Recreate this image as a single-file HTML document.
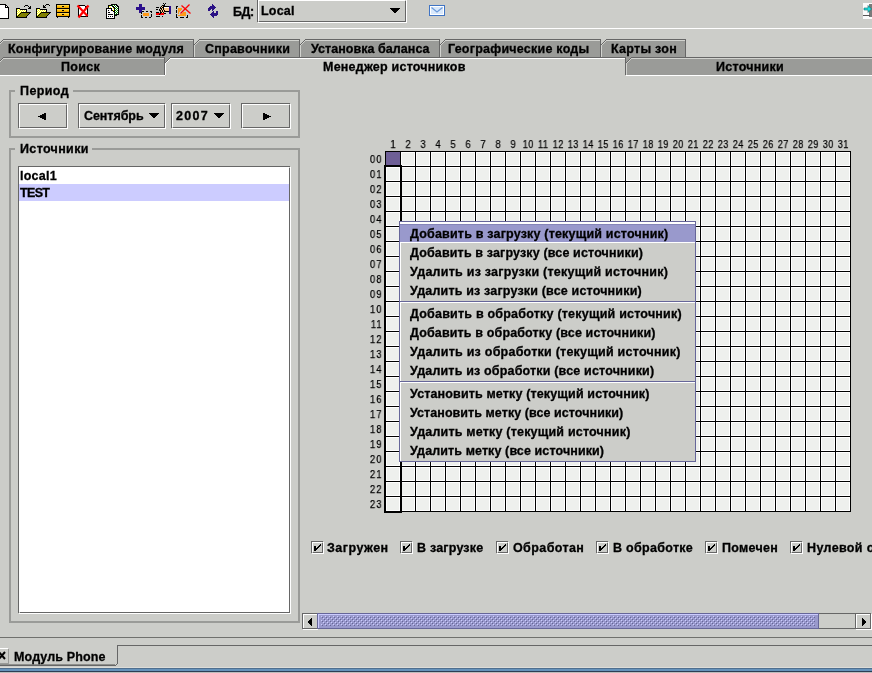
<!DOCTYPE html><html><head><meta charset='utf-8'><style>
*{margin:0;padding:0;box-sizing:border-box}
html,body{width:872px;height:673px;overflow:hidden;background:#cccdc9}
body{position:relative;font-family:"Liberation Sans",sans-serif;}
.a{position:absolute}
.t{position:absolute;font-weight:bold;font-size:12.5px;line-height:14px;white-space:pre;color:#000;will-change:transform;-webkit-text-stroke:0.3px #000}
.n{position:absolute;font-weight:normal;font-size:11px;line-height:12px;white-space:pre;color:#000;will-change:transform;-webkit-text-stroke:0.25px #000}
svg{position:absolute;overflow:visible}
</style></head><body><div class="a" style="left:0px;top:28px;width:872px;height:1px;background:#ffffff;"></div>
<svg class="a" style="left:-6px;top:4px" width="16" height="15" shape-rendering="crispEdges"><rect x="0" y="0" width="12" height="1" fill="#000000"/><rect x="0" y="1" width="1" height="1" fill="#000000"/><rect x="1" y="1" width="10" height="1" fill="#ffffff"/><rect x="11" y="1" width="2" height="1" fill="#000000"/><rect x="0" y="2" width="1" height="1" fill="#000000"/><rect x="1" y="2" width="10" height="1" fill="#ffffff"/><rect x="11" y="2" width="1" height="1" fill="#000000"/><rect x="12" y="2" width="1" height="1" fill="#ffffff"/><rect x="13" y="2" width="1" height="1" fill="#000000"/><rect x="0" y="3" width="1" height="1" fill="#000000"/><rect x="1" y="3" width="10" height="1" fill="#ffffff"/><rect x="11" y="3" width="4" height="1" fill="#000000"/><rect x="0" y="4" width="1" height="1" fill="#000000"/><rect x="1" y="4" width="13" height="1" fill="#ffffff"/><rect x="14" y="4" width="1" height="1" fill="#000000"/><rect x="0" y="5" width="1" height="1" fill="#000000"/><rect x="1" y="5" width="13" height="1" fill="#ffffff"/><rect x="14" y="5" width="1" height="1" fill="#000000"/><rect x="0" y="6" width="1" height="1" fill="#000000"/><rect x="1" y="6" width="13" height="1" fill="#ffffff"/><rect x="14" y="6" width="1" height="1" fill="#000000"/><rect x="0" y="7" width="1" height="1" fill="#000000"/><rect x="1" y="7" width="13" height="1" fill="#ffffff"/><rect x="14" y="7" width="1" height="1" fill="#000000"/><rect x="0" y="8" width="1" height="1" fill="#000000"/><rect x="1" y="8" width="13" height="1" fill="#ffffff"/><rect x="14" y="8" width="1" height="1" fill="#000000"/><rect x="0" y="9" width="1" height="1" fill="#000000"/><rect x="1" y="9" width="13" height="1" fill="#ffffff"/><rect x="14" y="9" width="1" height="1" fill="#000000"/><rect x="0" y="10" width="1" height="1" fill="#000000"/><rect x="1" y="10" width="13" height="1" fill="#ffffff"/><rect x="14" y="10" width="1" height="1" fill="#000000"/><rect x="0" y="11" width="1" height="1" fill="#000000"/><rect x="1" y="11" width="13" height="1" fill="#ffffff"/><rect x="14" y="11" width="1" height="1" fill="#000000"/><rect x="0" y="12" width="1" height="1" fill="#000000"/><rect x="1" y="12" width="13" height="1" fill="#ffffff"/><rect x="14" y="12" width="1" height="1" fill="#000000"/><rect x="0" y="13" width="1" height="1" fill="#000000"/><rect x="1" y="13" width="13" height="1" fill="#ffffff"/><rect x="14" y="13" width="1" height="1" fill="#000000"/><rect x="0" y="14" width="15" height="1" fill="#000000"/></svg>
<svg class="a" style="left:14px;top:2px" width="18" height="16" shape-rendering="crispEdges"><rect x="11" y="3" width="3" height="1" fill="#000000"/><rect x="10" y="4" width="1" height="1" fill="#000000"/><rect x="14" y="4" width="1" height="1" fill="#000000"/><rect x="16" y="4" width="1" height="1" fill="#000000"/><rect x="15" y="5" width="2" height="1" fill="#000000"/><rect x="2" y="6" width="4" height="1" fill="#000000"/><rect x="14" y="6" width="3" height="1" fill="#000000"/><rect x="2" y="7" width="1" height="1" fill="#000000"/><rect x="3" y="7" width="1" height="1" fill="#ffff00"/><rect x="4" y="7" width="1" height="1" fill="#ffffff"/><rect x="5" y="7" width="1" height="1" fill="#ffff00"/><rect x="6" y="7" width="7" height="1" fill="#000000"/><rect x="2" y="8" width="1" height="1" fill="#000000"/><rect x="3" y="8" width="1" height="1" fill="#ffffff"/><rect x="4" y="8" width="1" height="1" fill="#ffff00"/><rect x="5" y="8" width="1" height="1" fill="#ffffff"/><rect x="6" y="8" width="1" height="1" fill="#ffff00"/><rect x="7" y="8" width="1" height="1" fill="#ffffff"/><rect x="8" y="8" width="1" height="1" fill="#ffff00"/><rect x="9" y="8" width="1" height="1" fill="#ffffff"/><rect x="10" y="8" width="1" height="1" fill="#ffff00"/><rect x="11" y="8" width="1" height="1" fill="#ffffff"/><rect x="12" y="8" width="1" height="1" fill="#000000"/><rect x="2" y="9" width="1" height="1" fill="#000000"/><rect x="3" y="9" width="1" height="1" fill="#ffff00"/><rect x="4" y="9" width="1" height="1" fill="#ffffff"/><rect x="5" y="9" width="1" height="1" fill="#ffff00"/><rect x="6" y="9" width="1" height="1" fill="#ffffff"/><rect x="7" y="9" width="1" height="1" fill="#ffff00"/><rect x="8" y="9" width="1" height="1" fill="#ffffff"/><rect x="9" y="9" width="1" height="1" fill="#ffff00"/><rect x="10" y="9" width="1" height="1" fill="#ffffff"/><rect x="11" y="9" width="1" height="1" fill="#ffff00"/><rect x="12" y="9" width="1" height="1" fill="#000000"/><rect x="2" y="10" width="1" height="1" fill="#000000"/><rect x="3" y="10" width="1" height="1" fill="#ffffff"/><rect x="4" y="10" width="1" height="1" fill="#ffff00"/><rect x="5" y="10" width="1" height="1" fill="#ffffff"/><rect x="6" y="10" width="1" height="1" fill="#ffff00"/><rect x="7" y="10" width="10" height="1" fill="#000000"/><rect x="2" y="11" width="1" height="1" fill="#000000"/><rect x="3" y="11" width="1" height="1" fill="#ffff00"/><rect x="4" y="11" width="1" height="1" fill="#ffffff"/><rect x="5" y="11" width="1" height="1" fill="#ffff00"/><rect x="6" y="11" width="1" height="1" fill="#000000"/><rect x="7" y="11" width="8" height="1" fill="#808000"/><rect x="15" y="11" width="1" height="1" fill="#000000"/><rect x="2" y="12" width="1" height="1" fill="#000000"/><rect x="3" y="12" width="1" height="1" fill="#ffffff"/><rect x="4" y="12" width="1" height="1" fill="#ffff00"/><rect x="5" y="12" width="1" height="1" fill="#000000"/><rect x="6" y="12" width="8" height="1" fill="#808000"/><rect x="14" y="12" width="1" height="1" fill="#000000"/><rect x="2" y="13" width="1" height="1" fill="#000000"/><rect x="3" y="13" width="1" height="1" fill="#ffff00"/><rect x="4" y="13" width="1" height="1" fill="#000000"/><rect x="5" y="13" width="8" height="1" fill="#808000"/><rect x="13" y="13" width="1" height="1" fill="#000000"/><rect x="2" y="14" width="2" height="1" fill="#000000"/><rect x="4" y="14" width="8" height="1" fill="#808000"/><rect x="12" y="14" width="1" height="1" fill="#000000"/><rect x="2" y="15" width="11" height="1" fill="#000000"/></svg>
<svg class="a" style="left:34px;top:2px" width="18" height="16" shape-rendering="crispEdges"><rect x="12" y="2" width="3" height="1" fill="#000000"/><rect x="9" y="3" width="1" height="1" fill="#000000"/><rect x="11" y="3" width="1" height="1" fill="#000000"/><rect x="15" y="3" width="1" height="1" fill="#000000"/><rect x="9" y="4" width="2" height="1" fill="#000000"/><rect x="9" y="5" width="3" height="1" fill="#000000"/><rect x="2" y="6" width="4" height="1" fill="#000000"/><rect x="2" y="7" width="1" height="1" fill="#000000"/><rect x="3" y="7" width="1" height="1" fill="#ffff00"/><rect x="4" y="7" width="1" height="1" fill="#ffffff"/><rect x="5" y="7" width="1" height="1" fill="#ffff00"/><rect x="6" y="7" width="7" height="1" fill="#000000"/><rect x="2" y="8" width="1" height="1" fill="#000000"/><rect x="3" y="8" width="1" height="1" fill="#ffffff"/><rect x="4" y="8" width="1" height="1" fill="#ffff00"/><rect x="5" y="8" width="1" height="1" fill="#ffffff"/><rect x="6" y="8" width="1" height="1" fill="#ffff00"/><rect x="7" y="8" width="1" height="1" fill="#ffffff"/><rect x="8" y="8" width="1" height="1" fill="#ffff00"/><rect x="9" y="8" width="1" height="1" fill="#ffffff"/><rect x="10" y="8" width="1" height="1" fill="#ffff00"/><rect x="11" y="8" width="1" height="1" fill="#ffffff"/><rect x="12" y="8" width="1" height="1" fill="#000000"/><rect x="2" y="9" width="1" height="1" fill="#000000"/><rect x="3" y="9" width="1" height="1" fill="#ffff00"/><rect x="4" y="9" width="1" height="1" fill="#ffffff"/><rect x="5" y="9" width="1" height="1" fill="#ffff00"/><rect x="6" y="9" width="1" height="1" fill="#ffffff"/><rect x="7" y="9" width="1" height="1" fill="#ffff00"/><rect x="8" y="9" width="1" height="1" fill="#ffffff"/><rect x="9" y="9" width="1" height="1" fill="#ffff00"/><rect x="10" y="9" width="1" height="1" fill="#ffffff"/><rect x="11" y="9" width="1" height="1" fill="#ffff00"/><rect x="12" y="9" width="1" height="1" fill="#000000"/><rect x="2" y="10" width="1" height="1" fill="#000000"/><rect x="3" y="10" width="1" height="1" fill="#ffffff"/><rect x="4" y="10" width="1" height="1" fill="#ffff00"/><rect x="5" y="10" width="1" height="1" fill="#ffffff"/><rect x="6" y="10" width="1" height="1" fill="#ffff00"/><rect x="7" y="10" width="10" height="1" fill="#000000"/><rect x="2" y="11" width="1" height="1" fill="#000000"/><rect x="3" y="11" width="1" height="1" fill="#ffff00"/><rect x="4" y="11" width="1" height="1" fill="#ffffff"/><rect x="5" y="11" width="1" height="1" fill="#ffff00"/><rect x="6" y="11" width="1" height="1" fill="#000000"/><rect x="7" y="11" width="8" height="1" fill="#808000"/><rect x="15" y="11" width="1" height="1" fill="#000000"/><rect x="2" y="12" width="1" height="1" fill="#000000"/><rect x="3" y="12" width="1" height="1" fill="#ffffff"/><rect x="4" y="12" width="1" height="1" fill="#ffff00"/><rect x="5" y="12" width="1" height="1" fill="#000000"/><rect x="6" y="12" width="8" height="1" fill="#808000"/><rect x="14" y="12" width="1" height="1" fill="#000000"/><rect x="2" y="13" width="1" height="1" fill="#000000"/><rect x="3" y="13" width="1" height="1" fill="#ffff00"/><rect x="4" y="13" width="1" height="1" fill="#000000"/><rect x="5" y="13" width="8" height="1" fill="#808000"/><rect x="13" y="13" width="1" height="1" fill="#000000"/><rect x="2" y="14" width="2" height="1" fill="#000000"/><rect x="4" y="14" width="8" height="1" fill="#808000"/><rect x="12" y="14" width="1" height="1" fill="#000000"/><rect x="2" y="15" width="11" height="1" fill="#000000"/></svg>
<svg class="a" style="left:54px;top:2px" width="18" height="16" shape-rendering="crispEdges"><rect x="2" y="2" width="14" height="1" fill="#000000"/><rect x="2" y="3" width="1" height="1" fill="#000000"/><rect x="3" y="3" width="12" height="1" fill="#ffd24a"/><rect x="15" y="3" width="1" height="1" fill="#000000"/><rect x="2" y="4" width="1" height="1" fill="#000000"/><rect x="3" y="4" width="5" height="1" fill="#ffbf00"/><rect x="8" y="4" width="2" height="1" fill="#000000"/><rect x="10" y="4" width="5" height="1" fill="#ffbf00"/><rect x="15" y="4" width="1" height="1" fill="#000000"/><rect x="2" y="5" width="1" height="1" fill="#000000"/><rect x="3" y="5" width="12" height="1" fill="#f0a800"/><rect x="15" y="5" width="1" height="1" fill="#000000"/><rect x="2" y="6" width="14" height="1" fill="#000000"/><rect x="2" y="7" width="1" height="1" fill="#000000"/><rect x="3" y="7" width="12" height="1" fill="#ffd24a"/><rect x="15" y="7" width="1" height="1" fill="#000000"/><rect x="2" y="8" width="1" height="1" fill="#000000"/><rect x="3" y="8" width="5" height="1" fill="#ffbf00"/><rect x="8" y="8" width="2" height="1" fill="#000000"/><rect x="10" y="8" width="5" height="1" fill="#ffbf00"/><rect x="15" y="8" width="1" height="1" fill="#000000"/><rect x="2" y="9" width="1" height="1" fill="#000000"/><rect x="3" y="9" width="12" height="1" fill="#f0a800"/><rect x="15" y="9" width="1" height="1" fill="#000000"/><rect x="2" y="10" width="14" height="1" fill="#000000"/><rect x="2" y="11" width="1" height="1" fill="#000000"/><rect x="3" y="11" width="12" height="1" fill="#ffd24a"/><rect x="15" y="11" width="1" height="1" fill="#000000"/><rect x="2" y="12" width="1" height="1" fill="#000000"/><rect x="3" y="12" width="5" height="1" fill="#ffbf00"/><rect x="8" y="12" width="2" height="1" fill="#000000"/><rect x="10" y="12" width="5" height="1" fill="#ffbf00"/><rect x="15" y="12" width="1" height="1" fill="#000000"/><rect x="2" y="13" width="1" height="1" fill="#000000"/><rect x="3" y="13" width="12" height="1" fill="#f0a800"/><rect x="15" y="13" width="1" height="1" fill="#000000"/><rect x="2" y="14" width="14" height="1" fill="#000000"/><rect x="3" y="15" width="1" height="1" fill="#000000"/><rect x="14" y="15" width="1" height="1" fill="#000000"/></svg>
<svg class="a" style="left:74px;top:2px" width="18" height="15" shape-rendering="crispEdges"><rect x="4" y="3" width="7" height="1" fill="#000000"/><rect x="4" y="4" width="1" height="1" fill="#000000"/><rect x="5" y="4" width="6" height="1" fill="#ffffff"/><rect x="11" y="4" width="2" height="1" fill="#000000"/><rect x="4" y="5" width="1" height="1" fill="#000000"/><rect x="5" y="5" width="6" height="1" fill="#ffffff"/><rect x="11" y="5" width="1" height="1" fill="#000000"/><rect x="12" y="5" width="1" height="1" fill="#ffffff"/><rect x="13" y="5" width="1" height="1" fill="#000000"/><rect x="4" y="6" width="1" height="1" fill="#000000"/><rect x="5" y="6" width="8" height="1" fill="#ffffff"/><rect x="13" y="6" width="1" height="1" fill="#000000"/><rect x="4" y="7" width="1" height="1" fill="#000000"/><rect x="5" y="7" width="8" height="1" fill="#ffffff"/><rect x="13" y="7" width="1" height="1" fill="#000000"/><rect x="4" y="8" width="1" height="1" fill="#000000"/><rect x="5" y="8" width="8" height="1" fill="#ffffff"/><rect x="13" y="8" width="1" height="1" fill="#000000"/><rect x="4" y="9" width="1" height="1" fill="#000000"/><rect x="5" y="9" width="8" height="1" fill="#ffffff"/><rect x="13" y="9" width="1" height="1" fill="#000000"/><rect x="4" y="10" width="1" height="1" fill="#000000"/><rect x="5" y="10" width="8" height="1" fill="#ffffff"/><rect x="13" y="10" width="1" height="1" fill="#000000"/><rect x="4" y="11" width="1" height="1" fill="#000000"/><rect x="5" y="11" width="8" height="1" fill="#ffffff"/><rect x="13" y="11" width="1" height="1" fill="#000000"/><rect x="4" y="12" width="1" height="1" fill="#000000"/><rect x="5" y="12" width="8" height="1" fill="#ffffff"/><rect x="13" y="12" width="1" height="1" fill="#000000"/><rect x="4" y="13" width="1" height="1" fill="#000000"/><rect x="5" y="13" width="8" height="1" fill="#ffffff"/><rect x="13" y="13" width="1" height="1" fill="#000000"/><rect x="4" y="14" width="10" height="1" fill="#000000"/></svg>
<svg class="a" style="left:74px;top:2px" width="18" height="18"><path d="M3.5 3.5 L13.5 14 M14.5 3.5 L4.5 15.5" stroke="#ff0000" stroke-width="2.2" fill="none"/></svg>
<svg class="a" style="left:102px;top:2px" width="20" height="17" shape-rendering="crispEdges"><rect x="9" y="2" width="6" height="1" fill="#000000"/><rect x="6" y="3" width="4" height="1" fill="#000000"/><rect x="10" y="3" width="1" height="1" fill="#008000"/><rect x="11" y="3" width="1" height="1" fill="#ffffff"/><rect x="12" y="3" width="1" height="1" fill="#008000"/><rect x="13" y="3" width="1" height="1" fill="#ffffff"/><rect x="14" y="3" width="2" height="1" fill="#000000"/><rect x="6" y="4" width="1" height="1" fill="#000000"/><rect x="7" y="4" width="1" height="1" fill="#ffff00"/><rect x="8" y="4" width="2" height="1" fill="#ffffff"/><rect x="10" y="4" width="2" height="1" fill="#000000"/><rect x="12" y="4" width="1" height="1" fill="#ffffff"/><rect x="13" y="4" width="1" height="1" fill="#008000"/><rect x="14" y="4" width="1" height="1" fill="#ffffff"/><rect x="15" y="4" width="2" height="1" fill="#000000"/><rect x="6" y="5" width="1" height="1" fill="#000000"/><rect x="7" y="5" width="1" height="1" fill="#ffffff"/><rect x="8" y="5" width="1" height="1" fill="#ffff00"/><rect x="9" y="5" width="2" height="1" fill="#ffffff"/><rect x="11" y="5" width="2" height="1" fill="#000000"/><rect x="13" y="5" width="1" height="1" fill="#ffffff"/><rect x="14" y="5" width="1" height="1" fill="#008000"/><rect x="15" y="5" width="1" height="1" fill="#ffffff"/><rect x="16" y="5" width="1" height="1" fill="#000000"/><rect x="4" y="6" width="6" height="1" fill="#000000"/><rect x="10" y="6" width="1" height="1" fill="#ffffff"/><rect x="11" y="6" width="1" height="1" fill="#ffff00"/><rect x="12" y="6" width="1" height="1" fill="#000000"/><rect x="13" y="6" width="1" height="1" fill="#008000"/><rect x="14" y="6" width="1" height="1" fill="#ffffff"/><rect x="15" y="6" width="1" height="1" fill="#008000"/><rect x="16" y="6" width="1" height="1" fill="#000000"/><rect x="4" y="7" width="1" height="1" fill="#000000"/><rect x="5" y="7" width="4" height="1" fill="#ffffff"/><rect x="9" y="7" width="1" height="1" fill="#000000"/><rect x="10" y="7" width="2" height="1" fill="#ffffff"/><rect x="12" y="7" width="1" height="1" fill="#000000"/><rect x="13" y="7" width="1" height="1" fill="#ffffff"/><rect x="14" y="7" width="1" height="1" fill="#008000"/><rect x="15" y="7" width="1" height="1" fill="#ffffff"/><rect x="16" y="7" width="1" height="1" fill="#000000"/><rect x="4" y="8" width="1" height="1" fill="#000000"/><rect x="5" y="8" width="1" height="1" fill="#ffffff"/><rect x="6" y="8" width="1" height="1" fill="#000000"/><rect x="7" y="8" width="2" height="1" fill="#ffffff"/><rect x="9" y="8" width="2" height="1" fill="#000000"/><rect x="11" y="8" width="1" height="1" fill="#ffff00"/><rect x="12" y="8" width="1" height="1" fill="#000000"/><rect x="13" y="8" width="1" height="1" fill="#008000"/><rect x="14" y="8" width="1" height="1" fill="#ffffff"/><rect x="15" y="8" width="1" height="1" fill="#008000"/><rect x="16" y="8" width="1" height="1" fill="#000000"/><rect x="4" y="9" width="1" height="1" fill="#000000"/><rect x="5" y="9" width="6" height="1" fill="#ffffff"/><rect x="11" y="9" width="2" height="1" fill="#000000"/><rect x="13" y="9" width="1" height="1" fill="#ffffff"/><rect x="14" y="9" width="1" height="1" fill="#008000"/><rect x="15" y="9" width="1" height="1" fill="#ffffff"/><rect x="16" y="9" width="1" height="1" fill="#000000"/><rect x="4" y="10" width="1" height="1" fill="#000000"/><rect x="5" y="10" width="1" height="1" fill="#ffffff"/><rect x="6" y="10" width="2" height="1" fill="#000000"/><rect x="8" y="10" width="4" height="1" fill="#ffffff"/><rect x="12" y="10" width="1" height="1" fill="#000000"/><rect x="13" y="10" width="1" height="1" fill="#008000"/><rect x="14" y="10" width="1" height="1" fill="#ffffff"/><rect x="15" y="10" width="1" height="1" fill="#008000"/><rect x="16" y="10" width="1" height="1" fill="#000000"/><rect x="4" y="11" width="1" height="1" fill="#000000"/><rect x="5" y="11" width="7" height="1" fill="#ffffff"/><rect x="12" y="11" width="1" height="1" fill="#000000"/><rect x="13" y="11" width="1" height="1" fill="#ffffff"/><rect x="14" y="11" width="1" height="1" fill="#008000"/><rect x="15" y="11" width="1" height="1" fill="#ffffff"/><rect x="16" y="11" width="1" height="1" fill="#000000"/><rect x="4" y="12" width="1" height="1" fill="#000000"/><rect x="5" y="12" width="1" height="1" fill="#ffffff"/><rect x="6" y="12" width="5" height="1" fill="#000000"/><rect x="11" y="12" width="1" height="1" fill="#ffffff"/><rect x="12" y="12" width="1" height="1" fill="#000000"/><rect x="13" y="12" width="1" height="1" fill="#008000"/><rect x="14" y="12" width="3" height="1" fill="#000000"/><rect x="4" y="13" width="1" height="1" fill="#000000"/><rect x="5" y="13" width="7" height="1" fill="#ffffff"/><rect x="12" y="13" width="3" height="1" fill="#000000"/><rect x="4" y="14" width="1" height="1" fill="#000000"/><rect x="5" y="14" width="1" height="1" fill="#ffffff"/><rect x="6" y="14" width="1" height="1" fill="#000000"/><rect x="7" y="14" width="1" height="1" fill="#ffffff"/><rect x="8" y="14" width="1" height="1" fill="#000000"/><rect x="9" y="14" width="1" height="1" fill="#ffffff"/><rect x="10" y="14" width="1" height="1" fill="#000000"/><rect x="11" y="14" width="1" height="1" fill="#ffffff"/><rect x="12" y="14" width="1" height="1" fill="#000000"/><rect x="4" y="15" width="1" height="1" fill="#000000"/><rect x="5" y="15" width="7" height="1" fill="#ffffff"/><rect x="12" y="15" width="1" height="1" fill="#000000"/><rect x="4" y="16" width="9" height="1" fill="#000000"/></svg>
<svg class="a" style="left:134px;top:2px" width="18" height="16" shape-rendering="crispEdges"><rect x="5" y="2" width="3" height="1" fill="#2b0f8c"/><rect x="5" y="3" width="3" height="1" fill="#2b0f8c"/><rect x="5" y="4" width="3" height="1" fill="#2b0f8c"/><rect x="2" y="5" width="9" height="1" fill="#2b0f8c"/><rect x="2" y="6" width="9" height="1" fill="#2b0f8c"/><rect x="2" y="7" width="9" height="1" fill="#2b0f8c"/><rect x="5" y="8" width="3" height="1" fill="#2b0f8c"/><rect x="5" y="9" width="3" height="1" fill="#2b0f8c"/><rect x="8" y="9" width="2" height="1" fill="#000000"/><rect x="12" y="9" width="2" height="1" fill="#000000"/><rect x="16" y="9" width="2" height="1" fill="#000000"/><rect x="5" y="10" width="2" height="1" fill="#2b0f8c"/><rect x="7" y="10" width="1" height="1" fill="#000000"/><rect x="17" y="10" width="1" height="1" fill="#000000"/><rect x="7" y="11" width="1" height="1" fill="#000000"/><rect x="9" y="11" width="6" height="1" fill="#ff9a1a"/><rect x="9" y="12" width="6" height="1" fill="#ff9a1a"/><rect x="17" y="12" width="1" height="1" fill="#000000"/><rect x="7" y="13" width="1" height="1" fill="#000000"/><rect x="9" y="13" width="6" height="1" fill="#ff9a1a"/><rect x="17" y="13" width="1" height="1" fill="#000000"/><rect x="7" y="14" width="1" height="1" fill="#000000"/><rect x="17" y="14" width="1" height="1" fill="#000000"/><rect x="7" y="15" width="2" height="1" fill="#000000"/><rect x="11" y="15" width="2" height="1" fill="#000000"/><rect x="15" y="15" width="2" height="1" fill="#000000"/></svg>
<svg class="a" style="left:152px;top:0px" width="20" height="17" shape-rendering="crispEdges"><rect x="11" y="3" width="1" height="1" fill="#000000"/><rect x="13" y="3" width="1" height="1" fill="#000000"/><rect x="12" y="4" width="1" height="1" fill="#000000"/><rect x="10" y="5" width="3" height="1" fill="#000000"/><rect x="9" y="6" width="1" height="1" fill="#000000"/><rect x="10" y="6" width="1" height="1" fill="#ffc98a"/><rect x="11" y="6" width="6" height="1" fill="#000000"/><rect x="17" y="6" width="2" height="1" fill="#2a0a8a"/><rect x="4" y="7" width="3" height="1" fill="#000000"/><rect x="8" y="7" width="1" height="1" fill="#000000"/><rect x="9" y="7" width="1" height="1" fill="#ffc98a"/><rect x="10" y="7" width="2" height="1" fill="#000000"/><rect x="12" y="7" width="5" height="1" fill="#ffffff"/><rect x="17" y="7" width="2" height="1" fill="#2a0a8a"/><rect x="8" y="8" width="2" height="1" fill="#000000"/><rect x="10" y="8" width="1" height="1" fill="#ffc98a"/><rect x="11" y="8" width="1" height="1" fill="#000000"/><rect x="12" y="8" width="5" height="1" fill="#ffc98a"/><rect x="17" y="8" width="2" height="1" fill="#2a0a8a"/><rect x="4" y="9" width="2" height="1" fill="#000000"/><rect x="7" y="9" width="1" height="1" fill="#000000"/><rect x="8" y="9" width="1" height="1" fill="#ffc98a"/><rect x="9" y="9" width="1" height="1" fill="#000000"/><rect x="10" y="9" width="1" height="1" fill="#ffc98a"/><rect x="11" y="9" width="1" height="1" fill="#000000"/><rect x="12" y="9" width="5" height="1" fill="#ffc98a"/><rect x="17" y="9" width="2" height="1" fill="#2a0a8a"/><rect x="7" y="10" width="2" height="1" fill="#000000"/><rect x="9" y="10" width="1" height="1" fill="#ffc98a"/><rect x="10" y="10" width="1" height="1" fill="#000000"/><rect x="11" y="10" width="1" height="1" fill="#ffc98a"/><rect x="12" y="10" width="1" height="1" fill="#000000"/><rect x="13" y="10" width="4" height="1" fill="#ffc98a"/><rect x="17" y="10" width="2" height="1" fill="#2a0a8a"/><rect x="8" y="11" width="1" height="1" fill="#000000"/><rect x="9" y="11" width="1" height="1" fill="#ffc98a"/><rect x="10" y="11" width="1" height="1" fill="#000000"/><rect x="11" y="11" width="1" height="1" fill="#ffc98a"/><rect x="12" y="11" width="5" height="1" fill="#000000"/><rect x="17" y="11" width="2" height="1" fill="#2a0a8a"/><rect x="4" y="12" width="3" height="1" fill="#000000"/><rect x="8" y="12" width="2" height="1" fill="#000000"/><rect x="10" y="12" width="1" height="1" fill="#ffc98a"/><rect x="11" y="12" width="1" height="1" fill="#000000"/><rect x="12" y="12" width="1" height="1" fill="#ffc98a"/><rect x="17" y="12" width="2" height="1" fill="#2a0a8a"/><rect x="4" y="13" width="4" height="1" fill="#ff0000"/><rect x="8" y="13" width="1" height="1" fill="#000000"/><rect x="9" y="13" width="3" height="1" fill="#ff0000"/><rect x="12" y="13" width="2" height="1" fill="#000000"/><rect x="17" y="13" width="2" height="1" fill="#2a0a8a"/><rect x="4" y="14" width="3" height="1" fill="#ff0000"/><rect x="7" y="14" width="1" height="1" fill="#000000"/><rect x="8" y="14" width="4" height="1" fill="#ff0000"/><rect x="4" y="16" width="4" height="1" fill="#000000"/><rect x="10" y="16" width="1" height="1" fill="#000000"/></svg>
<svg class="a" style="left:172px;top:0px" width="20" height="18" shape-rendering="crispEdges"><rect x="4" y="6" width="2" height="1" fill="#000000"/><rect x="4" y="7" width="1" height="1" fill="#000000"/><rect x="4" y="8" width="1" height="1" fill="#000000"/><rect x="6" y="8" width="4" height="1" fill="#ff9a1a"/><rect x="6" y="9" width="4" height="1" fill="#ff9a1a"/><rect x="4" y="10" width="1" height="1" fill="#000000"/><rect x="6" y="10" width="3" height="1" fill="#ff9a1a"/><rect x="4" y="11" width="1" height="1" fill="#000000"/><rect x="6" y="11" width="2" height="1" fill="#ff9a1a"/><rect x="4" y="12" width="1" height="1" fill="#000000"/><rect x="6" y="12" width="1" height="1" fill="#ff9a1a"/><rect x="11" y="12" width="3" height="1" fill="#ff9a1a"/><rect x="6" y="13" width="1" height="1" fill="#ff9a1a"/><rect x="10" y="13" width="4" height="1" fill="#ff9a1a"/><rect x="4" y="14" width="1" height="1" fill="#000000"/><rect x="8" y="14" width="6" height="1" fill="#ff9a1a"/><rect x="4" y="15" width="1" height="1" fill="#000000"/><rect x="6" y="15" width="8" height="1" fill="#ff9a1a"/><rect x="15" y="15" width="1" height="1" fill="#000000"/><rect x="4" y="16" width="1" height="1" fill="#000000"/><rect x="15" y="16" width="1" height="1" fill="#000000"/><rect x="4" y="17" width="2" height="1" fill="#000000"/><rect x="8" y="17" width="4" height="1" fill="#000000"/><rect x="14" y="17" width="2" height="1" fill="#000000"/></svg>
<svg class="a" style="left:172px;top:0px" width="20" height="20"><path d="M9.5 5.5 L18.5 13.5 M17.5 4.5 L8.5 13.5" stroke="#ff0000" stroke-width="1.3" fill="none"/></svg>
<svg class="a" style="left:204px;top:0px" width="20" height="20" shape-rendering="crispEdges"><path d="M4 11 V8 L6 6 H8 V4 L12 7.5 L8 11 V9 H7 L6 10 V11 Z" fill="#2a1185"/><path d="M14 11 V14 L12 16 H10 V18 L6 14.5 L10 11 V13 H11 L12 12 V11 Z" fill="#2a1185"/></svg>
<svg class="a" style="left:429px;top:5px" width="16" height="11" shape-rendering="crispEdges"><rect x="0" y="0" width="16" height="11" fill="#3f74c4"/><rect x="1" y="1" width="14" height="9" fill="#fff"/><rect x="2" y="2" width="12" height="7" fill="#d8e8fb"/></svg>
<svg class="a" style="left:429px;top:5px" width="16" height="11"><path d="M2.5 2.5 L8 7 L13.5 2.5" stroke="#6d9bdb" stroke-width="1.2" fill="none"/></svg>
<svg class="a" style="left:863px;top:3px" width="9" height="16" shape-rendering="crispEdges"><rect x="0" y="0" width="9" height="16" fill="#fbfbfb"/><rect x="6" y="1" width="3" height="13" fill="#7a7a7a"/><rect x="0" y="12" width="7" height="1" fill="#555"/></svg>
<svg class="a" style="left:863px;top:3px" width="9" height="16"><path d="M1 5 H5 V2.5 L8.5 6 L5 9.5 V7 H1 Z" fill="#22e0e0" stroke="#0a6a6a" stroke-width="0.6"/></svg>
<div class="a" style="left:0px;top:75px;width:165px;height:1px;background:#fff;"></div>
<div class="a" style="left:626px;top:75px;width:246px;height:1px;background:#fff;"></div>
<svg class="a" style="left:-2px;top:39px" width="196" height="18" shape-rendering="crispEdges"><polygon points="0,6 6,0 196,0 196,18 0,18" fill="#9a9b98"/><rect x="6" y="0" width="190" height="1" fill="#666666"/><rect x="0" y="5" width="1" height="1" fill="#666666"/><rect x="1" y="4" width="1" height="1" fill="#666666"/><rect x="2" y="3" width="1" height="1" fill="#666666"/><rect x="3" y="2" width="1" height="1" fill="#666666"/><rect x="4" y="1" width="1" height="1" fill="#666666"/><rect x="5" y="0" width="1" height="1" fill="#666666"/><rect x="195" y="0" width="1" height="18" fill="#666666"/><rect x="6" y="1" width="189" height="1" fill="#d2d3cf"/><rect x="1" y="5" width="1" height="1" fill="#d2d3cf"/><rect x="2" y="4" width="1" height="1" fill="#d2d3cf"/><rect x="3" y="3" width="1" height="1" fill="#d2d3cf"/><rect x="4" y="2" width="1" height="1" fill="#d2d3cf"/><rect x="5" y="1" width="1" height="1" fill="#d2d3cf"/><rect x="0" y="6" width="1" height="12" fill="#d2d3cf"/></svg>
<div class="t" id="tx0" style="left:8.00px;top:42px;letter-spacing:0.227px;">Конфигурирование модуля</div>
<svg class="a" style="left:194px;top:39px" width="106" height="18" shape-rendering="crispEdges"><polygon points="0,6 6,0 106,0 106,18 0,18" fill="#9a9b98"/><rect x="6" y="0" width="100" height="1" fill="#666666"/><rect x="0" y="5" width="1" height="1" fill="#666666"/><rect x="1" y="4" width="1" height="1" fill="#666666"/><rect x="2" y="3" width="1" height="1" fill="#666666"/><rect x="3" y="2" width="1" height="1" fill="#666666"/><rect x="4" y="1" width="1" height="1" fill="#666666"/><rect x="5" y="0" width="1" height="1" fill="#666666"/><rect x="105" y="0" width="1" height="18" fill="#666666"/><rect x="6" y="1" width="99" height="1" fill="#d2d3cf"/><rect x="1" y="5" width="1" height="1" fill="#d2d3cf"/><rect x="2" y="4" width="1" height="1" fill="#d2d3cf"/><rect x="3" y="3" width="1" height="1" fill="#d2d3cf"/><rect x="4" y="2" width="1" height="1" fill="#d2d3cf"/><rect x="5" y="1" width="1" height="1" fill="#d2d3cf"/><rect x="0" y="6" width="1" height="12" fill="#d2d3cf"/></svg>
<div class="t" id="tx1" style="left:204.80px;top:42px;letter-spacing:0.240px;">Справочники</div>
<svg class="a" style="left:300px;top:39px" width="140" height="18" shape-rendering="crispEdges"><polygon points="0,6 6,0 140,0 140,18 0,18" fill="#9a9b98"/><rect x="6" y="0" width="134" height="1" fill="#666666"/><rect x="0" y="5" width="1" height="1" fill="#666666"/><rect x="1" y="4" width="1" height="1" fill="#666666"/><rect x="2" y="3" width="1" height="1" fill="#666666"/><rect x="3" y="2" width="1" height="1" fill="#666666"/><rect x="4" y="1" width="1" height="1" fill="#666666"/><rect x="5" y="0" width="1" height="1" fill="#666666"/><rect x="139" y="0" width="1" height="18" fill="#666666"/><rect x="6" y="1" width="133" height="1" fill="#d2d3cf"/><rect x="1" y="5" width="1" height="1" fill="#d2d3cf"/><rect x="2" y="4" width="1" height="1" fill="#d2d3cf"/><rect x="3" y="3" width="1" height="1" fill="#d2d3cf"/><rect x="4" y="2" width="1" height="1" fill="#d2d3cf"/><rect x="5" y="1" width="1" height="1" fill="#d2d3cf"/><rect x="0" y="6" width="1" height="12" fill="#d2d3cf"/></svg>
<div class="t" id="tx2" style="left:310.80px;top:42px;letter-spacing:0.050px;">Установка баланса</div>
<svg class="a" style="left:440px;top:39px" width="161" height="18" shape-rendering="crispEdges"><polygon points="0,6 6,0 161,0 161,18 0,18" fill="#9a9b98"/><rect x="6" y="0" width="155" height="1" fill="#666666"/><rect x="0" y="5" width="1" height="1" fill="#666666"/><rect x="1" y="4" width="1" height="1" fill="#666666"/><rect x="2" y="3" width="1" height="1" fill="#666666"/><rect x="3" y="2" width="1" height="1" fill="#666666"/><rect x="4" y="1" width="1" height="1" fill="#666666"/><rect x="5" y="0" width="1" height="1" fill="#666666"/><rect x="160" y="0" width="1" height="18" fill="#666666"/><rect x="6" y="1" width="154" height="1" fill="#d2d3cf"/><rect x="1" y="5" width="1" height="1" fill="#d2d3cf"/><rect x="2" y="4" width="1" height="1" fill="#d2d3cf"/><rect x="3" y="3" width="1" height="1" fill="#d2d3cf"/><rect x="4" y="2" width="1" height="1" fill="#d2d3cf"/><rect x="5" y="1" width="1" height="1" fill="#d2d3cf"/><rect x="0" y="6" width="1" height="12" fill="#d2d3cf"/></svg>
<div class="t" id="tx3" style="left:448.00px;top:42px;letter-spacing:0.233px;">Географические коды</div>
<svg class="a" style="left:601px;top:39px" width="85" height="18" shape-rendering="crispEdges"><polygon points="0,6 6,0 85,0 85,18 0,18" fill="#9a9b98"/><rect x="6" y="0" width="79" height="1" fill="#666666"/><rect x="0" y="5" width="1" height="1" fill="#666666"/><rect x="1" y="4" width="1" height="1" fill="#666666"/><rect x="2" y="3" width="1" height="1" fill="#666666"/><rect x="3" y="2" width="1" height="1" fill="#666666"/><rect x="4" y="1" width="1" height="1" fill="#666666"/><rect x="5" y="0" width="1" height="1" fill="#666666"/><rect x="84" y="0" width="1" height="18" fill="#666666"/><rect x="6" y="1" width="78" height="1" fill="#d2d3cf"/><rect x="1" y="5" width="1" height="1" fill="#d2d3cf"/><rect x="2" y="4" width="1" height="1" fill="#d2d3cf"/><rect x="3" y="3" width="1" height="1" fill="#d2d3cf"/><rect x="4" y="2" width="1" height="1" fill="#d2d3cf"/><rect x="5" y="1" width="1" height="1" fill="#d2d3cf"/><rect x="0" y="6" width="1" height="12" fill="#d2d3cf"/></svg>
<div class="t" id="tx4" style="left:610.60px;top:42px;letter-spacing:0.275px;">Карты зон</div>
<svg class="a" style="left:-2px;top:57px" width="167" height="18" shape-rendering="crispEdges"><polygon points="0,0 7,0 0,7" fill="#9a9b98"/><polygon points="0,6 6,0 167,0 167,18 0,18" fill="#9a9b98"/><rect x="6" y="0" width="161" height="1" fill="#666666"/><rect x="0" y="5" width="1" height="1" fill="#666666"/><rect x="1" y="4" width="1" height="1" fill="#666666"/><rect x="2" y="3" width="1" height="1" fill="#666666"/><rect x="3" y="2" width="1" height="1" fill="#666666"/><rect x="4" y="1" width="1" height="1" fill="#666666"/><rect x="5" y="0" width="1" height="1" fill="#666666"/><rect x="166" y="0" width="1" height="18" fill="#666666"/><rect x="6" y="1" width="160" height="1" fill="#d2d3cf"/><rect x="1" y="5" width="1" height="1" fill="#d2d3cf"/><rect x="2" y="4" width="1" height="1" fill="#d2d3cf"/><rect x="3" y="3" width="1" height="1" fill="#d2d3cf"/><rect x="4" y="2" width="1" height="1" fill="#d2d3cf"/><rect x="5" y="1" width="1" height="1" fill="#d2d3cf"/><rect x="0" y="6" width="1" height="12" fill="#d2d3cf"/></svg>
<div class="t" id="tx5" style="left:60.60px;top:60px;letter-spacing:0.300px;">Поиск</div>
<svg class="a" style="left:165px;top:57px" width="461" height="18" shape-rendering="crispEdges"><polygon points="0,0 7,0 0,7" fill="#9a9b98"/><polygon points="0,6 6,0 461,0 461,18 0,18" fill="#cccdc9"/><rect x="6" y="0" width="455" height="1" fill="#666666"/><rect x="0" y="5" width="1" height="1" fill="#666666"/><rect x="1" y="4" width="1" height="1" fill="#666666"/><rect x="2" y="3" width="1" height="1" fill="#666666"/><rect x="3" y="2" width="1" height="1" fill="#666666"/><rect x="4" y="1" width="1" height="1" fill="#666666"/><rect x="5" y="0" width="1" height="1" fill="#666666"/><rect x="460" y="0" width="1" height="18" fill="#666666"/><rect x="6" y="1" width="454" height="1" fill="#fff"/><rect x="1" y="5" width="1" height="1" fill="#fff"/><rect x="2" y="4" width="1" height="1" fill="#fff"/><rect x="3" y="3" width="1" height="1" fill="#fff"/><rect x="4" y="2" width="1" height="1" fill="#fff"/><rect x="5" y="1" width="1" height="1" fill="#fff"/><rect x="0" y="6" width="1" height="12" fill="#fff"/></svg>
<div class="t" id="tx6" style="left:323.20px;top:60px;letter-spacing:0.222px;">Менеджер источников</div>
<svg class="a" style="left:626px;top:57px" width="275" height="18" shape-rendering="crispEdges"><polygon points="0,0 7,0 0,7" fill="#9a9b98"/><polygon points="0,6 6,0 275,0 275,18 0,18" fill="#9a9b98"/><rect x="6" y="0" width="269" height="1" fill="#666666"/><rect x="0" y="5" width="1" height="1" fill="#666666"/><rect x="1" y="4" width="1" height="1" fill="#666666"/><rect x="2" y="3" width="1" height="1" fill="#666666"/><rect x="3" y="2" width="1" height="1" fill="#666666"/><rect x="4" y="1" width="1" height="1" fill="#666666"/><rect x="5" y="0" width="1" height="1" fill="#666666"/><rect x="274" y="0" width="1" height="18" fill="#666666"/><rect x="6" y="1" width="268" height="1" fill="#d2d3cf"/><rect x="1" y="5" width="1" height="1" fill="#d2d3cf"/><rect x="2" y="4" width="1" height="1" fill="#d2d3cf"/><rect x="3" y="3" width="1" height="1" fill="#d2d3cf"/><rect x="4" y="2" width="1" height="1" fill="#d2d3cf"/><rect x="5" y="1" width="1" height="1" fill="#d2d3cf"/><rect x="0" y="6" width="1" height="12" fill="#d2d3cf"/></svg>
<div class="t" id="tx7" style="left:715.60px;top:60px;letter-spacing:0.250px;">Источники</div>
<div class="a" style="left:9px;top:90px;width:6px;height:2px;background:#9a9b98;"></div>
<div class="a" style="left:73px;top:90px;width:227px;height:2px;background:#9a9b98;"></div>
<div class="a" style="left:9px;top:90px;width:2px;height:48px;background:#9a9b98;"></div>
<div class="a" style="left:298px;top:90px;width:2px;height:48px;background:#9a9b98;"></div>
<div class="a" style="left:9px;top:136px;width:291px;height:2px;background:#9a9b98;"></div>
<div class="t" id="tx8" style="left:20.20px;top:84px;letter-spacing:0.400px;">Период</div>
<div class="a" style="left:9px;top:148px;width:6px;height:2px;background:#9a9b98;"></div>
<div class="a" style="left:92px;top:148px;width:208px;height:2px;background:#9a9b98;"></div>
<div class="a" style="left:9px;top:148px;width:2px;height:475px;background:#9a9b98;"></div>
<div class="a" style="left:298px;top:148px;width:2px;height:475px;background:#9a9b98;"></div>
<div class="a" style="left:9px;top:621px;width:291px;height:2px;background:#9a9b98;"></div>
<div class="t" id="tx9" style="left:19.80px;top:142px;letter-spacing:0.350px;">Источники</div>
<div class="a" style="left:19px;top:104px;width:49px;height:25px;border:1px solid #fff;"></div>
<div class="a" style="left:18px;top:103px;width:49px;height:25px;border:1px solid #666666"></div>
<div class="a" style="left:18px;top:128px;width:1px;height:1px;background:#cccdc9;"></div>
<div class="a" style="left:19px;top:127px;width:1px;height:1px;background:#cccdc9;"></div>
<div class="a" style="left:67px;top:103px;width:1px;height:1px;background:#cccdc9;"></div>
<div class="a" style="left:66px;top:104px;width:1px;height:1px;background:#cccdc9;"></div>
<div class="a" style="left:79px;top:104px;width:87px;height:25px;border:1px solid #fff;"></div>
<div class="a" style="left:78px;top:103px;width:87px;height:25px;border:1px solid #666666"></div>
<div class="a" style="left:78px;top:128px;width:1px;height:1px;background:#cccdc9;"></div>
<div class="a" style="left:79px;top:127px;width:1px;height:1px;background:#cccdc9;"></div>
<div class="a" style="left:165px;top:103px;width:1px;height:1px;background:#cccdc9;"></div>
<div class="a" style="left:164px;top:104px;width:1px;height:1px;background:#cccdc9;"></div>
<div class="a" style="left:172px;top:104px;width:59px;height:25px;border:1px solid #fff;"></div>
<div class="a" style="left:171px;top:103px;width:59px;height:25px;border:1px solid #666666"></div>
<div class="a" style="left:171px;top:128px;width:1px;height:1px;background:#cccdc9;"></div>
<div class="a" style="left:172px;top:127px;width:1px;height:1px;background:#cccdc9;"></div>
<div class="a" style="left:230px;top:103px;width:1px;height:1px;background:#cccdc9;"></div>
<div class="a" style="left:229px;top:104px;width:1px;height:1px;background:#cccdc9;"></div>
<div class="a" style="left:242px;top:104px;width:49px;height:25px;border:1px solid #fff;"></div>
<div class="a" style="left:241px;top:103px;width:49px;height:25px;border:1px solid #666666"></div>
<div class="a" style="left:241px;top:128px;width:1px;height:1px;background:#cccdc9;"></div>
<div class="a" style="left:242px;top:127px;width:1px;height:1px;background:#cccdc9;"></div>
<div class="a" style="left:290px;top:103px;width:1px;height:1px;background:#cccdc9;"></div>
<div class="a" style="left:289px;top:104px;width:1px;height:1px;background:#cccdc9;"></div>
<svg class="a" style="left:38px;top:113px" width="8" height="7" shape-rendering="crispEdges"><path d="M0 3h2v1h-2z M2 2h2v3h-2z M4 1h2v5h-2z M6 0h2v7h-2z" fill="#000"/></svg>
<svg class="a" style="left:263px;top:113px" width="8" height="7" shape-rendering="crispEdges"><path d="M0 0h2v7h-2z M2 1h2v5h-2z M4 2h2v3h-2z M6 3h2v1h-2z" fill="#000"/></svg>
<div class="t" id="tx10" style="left:84.20px;top:109px;letter-spacing:-0.057px;">Сентябрь</div>
<svg class="a" style="left:149px;top:113px" width="10" height="5" shape-rendering="crispEdges"><path d="M0 0h10v1h-10z M1 1h8v1h-8z M2 2h6v1h-6z M3 3h4v1h-4z M4 4h2v1h-2z" fill="#000"/></svg>
<div class="t" id="tx11" style="left:176.40px;top:109px;letter-spacing:1.267px;">2007</div>
<svg class="a" style="left:214px;top:113px" width="10" height="5" shape-rendering="crispEdges"><path d="M0 0h10v1h-10z M1 1h8v1h-8z M2 2h6v1h-6z M3 3h4v1h-4z M4 4h2v1h-2z" fill="#000"/></svg>
<div class="a" style="left:19px;top:167px;width:272px;height:447px;border:1px solid #fff;background:#fff;"></div>
<div class="a" style="left:18px;top:166px;width:272px;height:447px;border:1px solid #666666"></div>
<div class="a" style="left:18px;top:613px;width:1px;height:1px;background:#cccdc9;"></div>
<div class="a" style="left:19px;top:612px;width:1px;height:1px;background:#cccdc9;"></div>
<div class="a" style="left:290px;top:166px;width:1px;height:1px;background:#cccdc9;"></div>
<div class="a" style="left:289px;top:167px;width:1px;height:1px;background:#cccdc9;"></div>
<div class="a" style="left:19px;top:184px;width:270px;height:17px;background:#ccccff;"></div>
<div class="t" id="tx12" style="left:19.80px;top:169px;letter-spacing:0.240px;">local1</div>
<div class="t" id="tx13" style="left:20.00px;top:186px;letter-spacing:-0.667px;">TEST</div>
<div class="a" style="left:0px;top:637px;width:872px;height:1px;background:#6f706d;"></div>
<svg class="a" style="left:385px;top:151px" width="466" height="361" shape-rendering="crispEdges"><defs><pattern id="cell" x="0" y="0" width="15" height="15" patternUnits="userSpaceOnUse"><rect x="0" y="0" width="15" height="15" fill="#000"/><rect x="1" y="1" width="14" height="14" fill="#fff"/><rect x="2" y="2" width="12" height="12" fill="#eef0ed"/></pattern></defs><rect x="0" y="0" width="465" height="360" fill="url(#cell)"/><rect x="465" y="0" width="1" height="361" fill="#000"/><rect x="0" y="360" width="466" height="1" fill="#000"/><rect x="1" y="1" width="14" height="14" fill="#6e5f96"/><rect x="-1" y="14" width="18" height="2" fill="#000"/><rect x="-1" y="14" width="2" height="348" fill="#000"/><rect x="15" y="14" width="2" height="348" fill="#000"/><rect x="-1" y="360" width="18" height="2" fill="#000"/></svg>
<div class="n" style="left:382.5px;top:138px;width:20px;text-align:center;transform:scaleX(0.85);letter-spacing:0.4px;text-indent:0.4px">1</div>
<div class="n" style="left:397.5px;top:138px;width:20px;text-align:center;transform:scaleX(0.85);letter-spacing:0.4px;text-indent:0.4px">2</div>
<div class="n" style="left:412.5px;top:138px;width:20px;text-align:center;transform:scaleX(0.85);letter-spacing:0.4px;text-indent:0.4px">3</div>
<div class="n" style="left:427.5px;top:138px;width:20px;text-align:center;transform:scaleX(0.85);letter-spacing:0.4px;text-indent:0.4px">4</div>
<div class="n" style="left:442.5px;top:138px;width:20px;text-align:center;transform:scaleX(0.85);letter-spacing:0.4px;text-indent:0.4px">5</div>
<div class="n" style="left:457.5px;top:138px;width:20px;text-align:center;transform:scaleX(0.85);letter-spacing:0.4px;text-indent:0.4px">6</div>
<div class="n" style="left:472.5px;top:138px;width:20px;text-align:center;transform:scaleX(0.85);letter-spacing:0.4px;text-indent:0.4px">7</div>
<div class="n" style="left:487.5px;top:138px;width:20px;text-align:center;transform:scaleX(0.85);letter-spacing:0.4px;text-indent:0.4px">8</div>
<div class="n" style="left:502.5px;top:138px;width:20px;text-align:center;transform:scaleX(0.85);letter-spacing:0.4px;text-indent:0.4px">9</div>
<div class="n" style="left:517.5px;top:138px;width:20px;text-align:center;transform:scaleX(0.85);letter-spacing:0.4px;text-indent:0.4px">10</div>
<div class="n" style="left:532.5px;top:138px;width:20px;text-align:center;transform:scaleX(0.85);letter-spacing:0.4px;text-indent:0.4px">11</div>
<div class="n" style="left:547.5px;top:138px;width:20px;text-align:center;transform:scaleX(0.85);letter-spacing:0.4px;text-indent:0.4px">12</div>
<div class="n" style="left:562.5px;top:138px;width:20px;text-align:center;transform:scaleX(0.85);letter-spacing:0.4px;text-indent:0.4px">13</div>
<div class="n" style="left:577.5px;top:138px;width:20px;text-align:center;transform:scaleX(0.85);letter-spacing:0.4px;text-indent:0.4px">14</div>
<div class="n" style="left:592.5px;top:138px;width:20px;text-align:center;transform:scaleX(0.85);letter-spacing:0.4px;text-indent:0.4px">15</div>
<div class="n" style="left:607.5px;top:138px;width:20px;text-align:center;transform:scaleX(0.85);letter-spacing:0.4px;text-indent:0.4px">16</div>
<div class="n" style="left:622.5px;top:138px;width:20px;text-align:center;transform:scaleX(0.85);letter-spacing:0.4px;text-indent:0.4px">17</div>
<div class="n" style="left:637.5px;top:138px;width:20px;text-align:center;transform:scaleX(0.85);letter-spacing:0.4px;text-indent:0.4px">18</div>
<div class="n" style="left:652.5px;top:138px;width:20px;text-align:center;transform:scaleX(0.85);letter-spacing:0.4px;text-indent:0.4px">19</div>
<div class="n" style="left:667.5px;top:138px;width:20px;text-align:center;transform:scaleX(0.85);letter-spacing:0.4px;text-indent:0.4px">20</div>
<div class="n" style="left:682.5px;top:138px;width:20px;text-align:center;transform:scaleX(0.85);letter-spacing:0.4px;text-indent:0.4px">21</div>
<div class="n" style="left:697.5px;top:138px;width:20px;text-align:center;transform:scaleX(0.85);letter-spacing:0.4px;text-indent:0.4px">22</div>
<div class="n" style="left:712.5px;top:138px;width:20px;text-align:center;transform:scaleX(0.85);letter-spacing:0.4px;text-indent:0.4px">23</div>
<div class="n" style="left:727.5px;top:138px;width:20px;text-align:center;transform:scaleX(0.85);letter-spacing:0.4px;text-indent:0.4px">24</div>
<div class="n" style="left:742.5px;top:138px;width:20px;text-align:center;transform:scaleX(0.85);letter-spacing:0.4px;text-indent:0.4px">25</div>
<div class="n" style="left:757.5px;top:138px;width:20px;text-align:center;transform:scaleX(0.85);letter-spacing:0.4px;text-indent:0.4px">26</div>
<div class="n" style="left:772.5px;top:138px;width:20px;text-align:center;transform:scaleX(0.85);letter-spacing:0.4px;text-indent:0.4px">27</div>
<div class="n" style="left:787.5px;top:138px;width:20px;text-align:center;transform:scaleX(0.85);letter-spacing:0.4px;text-indent:0.4px">28</div>
<div class="n" style="left:802.5px;top:138px;width:20px;text-align:center;transform:scaleX(0.85);letter-spacing:0.4px;text-indent:0.4px">29</div>
<div class="n" style="left:817.5px;top:138px;width:20px;text-align:center;transform:scaleX(0.85);letter-spacing:0.4px;text-indent:0.4px">30</div>
<div class="n" style="left:832.5px;top:138px;width:20px;text-align:center;transform:scaleX(0.85);letter-spacing:0.4px;text-indent:0.4px">31</div>
<div class="n" style="left:350px;top:153px;width:32.5px;text-align:right;letter-spacing:1.2px;transform:scaleX(0.85);transform-origin:right center">00</div>
<div class="n" style="left:350px;top:168px;width:32.5px;text-align:right;letter-spacing:1.2px;transform:scaleX(0.85);transform-origin:right center">01</div>
<div class="n" style="left:350px;top:183px;width:32.5px;text-align:right;letter-spacing:1.2px;transform:scaleX(0.85);transform-origin:right center">02</div>
<div class="n" style="left:350px;top:198px;width:32.5px;text-align:right;letter-spacing:1.2px;transform:scaleX(0.85);transform-origin:right center">03</div>
<div class="n" style="left:350px;top:213px;width:32.5px;text-align:right;letter-spacing:1.2px;transform:scaleX(0.85);transform-origin:right center">04</div>
<div class="n" style="left:350px;top:228px;width:32.5px;text-align:right;letter-spacing:1.2px;transform:scaleX(0.85);transform-origin:right center">05</div>
<div class="n" style="left:350px;top:243px;width:32.5px;text-align:right;letter-spacing:1.2px;transform:scaleX(0.85);transform-origin:right center">06</div>
<div class="n" style="left:350px;top:258px;width:32.5px;text-align:right;letter-spacing:1.2px;transform:scaleX(0.85);transform-origin:right center">07</div>
<div class="n" style="left:350px;top:273px;width:32.5px;text-align:right;letter-spacing:1.2px;transform:scaleX(0.85);transform-origin:right center">08</div>
<div class="n" style="left:350px;top:288px;width:32.5px;text-align:right;letter-spacing:1.2px;transform:scaleX(0.85);transform-origin:right center">09</div>
<div class="n" style="left:350px;top:303px;width:32.5px;text-align:right;letter-spacing:1.2px;transform:scaleX(0.85);transform-origin:right center">10</div>
<div class="n" style="left:350px;top:318px;width:32.5px;text-align:right;letter-spacing:1.2px;transform:scaleX(0.85);transform-origin:right center">11</div>
<div class="n" style="left:350px;top:333px;width:32.5px;text-align:right;letter-spacing:1.2px;transform:scaleX(0.85);transform-origin:right center">12</div>
<div class="n" style="left:350px;top:348px;width:32.5px;text-align:right;letter-spacing:1.2px;transform:scaleX(0.85);transform-origin:right center">13</div>
<div class="n" style="left:350px;top:363px;width:32.5px;text-align:right;letter-spacing:1.2px;transform:scaleX(0.85);transform-origin:right center">14</div>
<div class="n" style="left:350px;top:378px;width:32.5px;text-align:right;letter-spacing:1.2px;transform:scaleX(0.85);transform-origin:right center">15</div>
<div class="n" style="left:350px;top:393px;width:32.5px;text-align:right;letter-spacing:1.2px;transform:scaleX(0.85);transform-origin:right center">16</div>
<div class="n" style="left:350px;top:408px;width:32.5px;text-align:right;letter-spacing:1.2px;transform:scaleX(0.85);transform-origin:right center">17</div>
<div class="n" style="left:350px;top:423px;width:32.5px;text-align:right;letter-spacing:1.2px;transform:scaleX(0.85);transform-origin:right center">18</div>
<div class="n" style="left:350px;top:438px;width:32.5px;text-align:right;letter-spacing:1.2px;transform:scaleX(0.85);transform-origin:right center">19</div>
<div class="n" style="left:350px;top:453px;width:32.5px;text-align:right;letter-spacing:1.2px;transform:scaleX(0.85);transform-origin:right center">20</div>
<div class="n" style="left:350px;top:468px;width:32.5px;text-align:right;letter-spacing:1.2px;transform:scaleX(0.85);transform-origin:right center">21</div>
<div class="n" style="left:350px;top:483px;width:32.5px;text-align:right;letter-spacing:1.2px;transform:scaleX(0.85);transform-origin:right center">22</div>
<div class="n" style="left:350px;top:498px;width:32.5px;text-align:right;letter-spacing:1.2px;transform:scaleX(0.85);transform-origin:right center">23</div>
<div class="a" style="left:399px;top:221px;width:297px;height:241px;background:#cccdc9;border:1px solid #666699"></div>
<div class="a" style="left:400px;top:222px;width:295px;height:1px;background:#fff;"></div>
<div class="a" style="left:400px;top:222px;width:1px;height:239px;background:#fff;"></div>
<div class="a" style="left:400px;top:224px;width:295px;height:18px;background:#9999cc;"></div>
<div class="a" style="left:400px;top:224px;width:295px;height:1px;background:#8585b8;"></div>
<div class="a" style="left:400px;top:223px;width:295px;height:1px;background:#fff;"></div>
<div class="a" style="left:400px;top:242px;width:295px;height:1px;background:#fff;"></div>
<div class="t" id="tx14" style="left:410.00px;top:227px;letter-spacing:0.189px;">Добавить в загрузку (текущий источник)</div>
<div class="t" id="tx15" style="left:410.00px;top:246px;letter-spacing:0.147px;">Добавить в загрузку (все источники)</div>
<div class="t" id="tx16" style="left:410.00px;top:265px;letter-spacing:0.243px;">Удалить из загрузки (текущий источник)</div>
<div class="t" id="tx17" style="left:410.00px;top:284px;letter-spacing:0.176px;">Удалить из загрузки (все источники)</div>
<div class="a" style="left:400px;top:301px;width:295px;height:1px;background:#666699;"></div>
<div class="a" style="left:400px;top:302px;width:295px;height:1px;background:#fff;"></div>
<div class="t" id="tx18" style="left:410.00px;top:307px;letter-spacing:0.211px;">Добавить в обработку (текущий источник)</div>
<div class="t" id="tx19" style="left:410.00px;top:326px;letter-spacing:0.143px;">Добавить в обработку (все источники)</div>
<div class="t" id="tx20" style="left:410.00px;top:345px;letter-spacing:0.237px;">Удалить из обработки (текущий источник)</div>
<div class="t" id="tx21" style="left:410.00px;top:364px;letter-spacing:0.171px;">Удалить из обработки (все источники)</div>
<div class="a" style="left:400px;top:381px;width:295px;height:1px;background:#666699;"></div>
<div class="a" style="left:400px;top:382px;width:295px;height:1px;background:#fff;"></div>
<div class="t" id="tx22" style="left:410.00px;top:387px;letter-spacing:0.147px;">Установить метку (текущий источник)</div>
<div class="t" id="tx23" style="left:410.00px;top:406px;letter-spacing:0.065px;">Установить метку (все источники)</div>
<div class="t" id="tx24" style="left:410.00px;top:425px;letter-spacing:0.194px;">Удалить метку (текущий источник)</div>
<div class="t" id="tx25" style="left:410.00px;top:444px;letter-spacing:0.107px;">Удалить метку (все источники)</div>
<div class="a" style="left:312px;top:542px;width:12px;height:12px;border:1px solid #fff;"></div>
<div class="a" style="left:311px;top:541px;width:12px;height:12px;border:1px solid #666666"></div>
<div class="a" style="left:311px;top:553px;width:1px;height:1px;background:#cccdc9;"></div>
<div class="a" style="left:312px;top:552px;width:1px;height:1px;background:#cccdc9;"></div>
<div class="a" style="left:323px;top:541px;width:1px;height:1px;background:#cccdc9;"></div>
<div class="a" style="left:322px;top:542px;width:1px;height:1px;background:#cccdc9;"></div>
<svg class="a" style="left:311px;top:541px" width="13" height="13" shape-rendering="crispEdges"><path d="M3 5h2v5h-2z M9 3h1v1h-1z M8 4h1v2h-1z M9 4h1v1h-1z M7 5h1v2h-1z M6 6h1v2h-1z M5 7h1v2h-1z" fill="#000"/></svg>
<div class="t" id="tx26" style="left:327.00px;top:541px;letter-spacing:0.486px;">Загружен</div>
<div class="a" style="left:401px;top:542px;width:12px;height:12px;border:1px solid #fff;"></div>
<div class="a" style="left:400px;top:541px;width:12px;height:12px;border:1px solid #666666"></div>
<div class="a" style="left:400px;top:553px;width:1px;height:1px;background:#cccdc9;"></div>
<div class="a" style="left:401px;top:552px;width:1px;height:1px;background:#cccdc9;"></div>
<div class="a" style="left:412px;top:541px;width:1px;height:1px;background:#cccdc9;"></div>
<div class="a" style="left:411px;top:542px;width:1px;height:1px;background:#cccdc9;"></div>
<svg class="a" style="left:400px;top:541px" width="13" height="13" shape-rendering="crispEdges"><path d="M3 5h2v5h-2z M9 3h1v1h-1z M8 4h1v2h-1z M9 4h1v1h-1z M7 5h1v2h-1z M6 6h1v2h-1z M5 7h1v2h-1z" fill="#000"/></svg>
<div class="t" id="tx27" style="left:416.80px;top:541px;letter-spacing:0.200px;">В загрузке</div>
<div class="a" style="left:497px;top:542px;width:12px;height:12px;border:1px solid #fff;"></div>
<div class="a" style="left:496px;top:541px;width:12px;height:12px;border:1px solid #666666"></div>
<div class="a" style="left:496px;top:553px;width:1px;height:1px;background:#cccdc9;"></div>
<div class="a" style="left:497px;top:552px;width:1px;height:1px;background:#cccdc9;"></div>
<div class="a" style="left:508px;top:541px;width:1px;height:1px;background:#cccdc9;"></div>
<div class="a" style="left:507px;top:542px;width:1px;height:1px;background:#cccdc9;"></div>
<svg class="a" style="left:496px;top:541px" width="13" height="13" shape-rendering="crispEdges"><path d="M3 5h2v5h-2z M9 3h1v1h-1z M8 4h1v2h-1z M9 4h1v1h-1z M7 5h1v2h-1z M6 6h1v2h-1z M5 7h1v2h-1z" fill="#000"/></svg>
<div class="t" id="tx28" style="left:512.80px;top:541px;letter-spacing:0.400px;">Обработан</div>
<div class="a" style="left:597px;top:542px;width:12px;height:12px;border:1px solid #fff;"></div>
<div class="a" style="left:596px;top:541px;width:12px;height:12px;border:1px solid #666666"></div>
<div class="a" style="left:596px;top:553px;width:1px;height:1px;background:#cccdc9;"></div>
<div class="a" style="left:597px;top:552px;width:1px;height:1px;background:#cccdc9;"></div>
<div class="a" style="left:608px;top:541px;width:1px;height:1px;background:#cccdc9;"></div>
<div class="a" style="left:607px;top:542px;width:1px;height:1px;background:#cccdc9;"></div>
<svg class="a" style="left:596px;top:541px" width="13" height="13" shape-rendering="crispEdges"><path d="M3 5h2v5h-2z M9 3h1v1h-1z M8 4h1v2h-1z M9 4h1v1h-1z M7 5h1v2h-1z M6 6h1v2h-1z M5 7h1v2h-1z" fill="#000"/></svg>
<div class="t" id="tx29" style="left:612.80px;top:541px;letter-spacing:0.300px;">В обработке</div>
<div class="a" style="left:706px;top:542px;width:12px;height:12px;border:1px solid #fff;"></div>
<div class="a" style="left:705px;top:541px;width:12px;height:12px;border:1px solid #666666"></div>
<div class="a" style="left:705px;top:553px;width:1px;height:1px;background:#cccdc9;"></div>
<div class="a" style="left:706px;top:552px;width:1px;height:1px;background:#cccdc9;"></div>
<div class="a" style="left:717px;top:541px;width:1px;height:1px;background:#cccdc9;"></div>
<div class="a" style="left:716px;top:542px;width:1px;height:1px;background:#cccdc9;"></div>
<svg class="a" style="left:705px;top:541px" width="13" height="13" shape-rendering="crispEdges"><path d="M3 5h2v5h-2z M9 3h1v1h-1z M8 4h1v2h-1z M9 4h1v1h-1z M7 5h1v2h-1z M6 6h1v2h-1z M5 7h1v2h-1z" fill="#000"/></svg>
<div class="t" id="tx30" style="left:721.80px;top:541px;letter-spacing:0.300px;">Помечен</div>
<div class="a" style="left:791px;top:542px;width:12px;height:12px;border:1px solid #fff;"></div>
<div class="a" style="left:790px;top:541px;width:12px;height:12px;border:1px solid #666666"></div>
<div class="a" style="left:790px;top:553px;width:1px;height:1px;background:#cccdc9;"></div>
<div class="a" style="left:791px;top:552px;width:1px;height:1px;background:#cccdc9;"></div>
<div class="a" style="left:802px;top:541px;width:1px;height:1px;background:#cccdc9;"></div>
<div class="a" style="left:801px;top:542px;width:1px;height:1px;background:#cccdc9;"></div>
<svg class="a" style="left:790px;top:541px" width="13" height="13" shape-rendering="crispEdges"><path d="M3 5h2v5h-2z M9 3h1v1h-1z M8 4h1v2h-1z M9 4h1v1h-1z M7 5h1v2h-1z M6 6h1v2h-1z M5 7h1v2h-1z" fill="#000"/></svg>
<div class="t" style="left:807px;top:541px;letter-spacing:0.35px">Нулевой объем</div>
<div class="a" style="left:303px;top:614px;width:15px;height:16px;border:1px solid #fff;border-right:none"></div>
<div class="a" style="left:302px;top:613px;width:15px;height:16px;border:1px solid #666666;border-right:none"></div>
<svg class="a" style="left:308px;top:618px" width="4" height="8" shape-rendering="crispEdges"><path d="M0 3h1v2h-1z M1 2h1v4h-1z M2 1h1v6h-1z M3 0h1v8h-1z" fill="#000"/></svg>
<div class="a" style="left:317px;top:613px;width:539px;height:1px;background:#666666;"></div>
<div class="a" style="left:317px;top:628px;width:539px;height:1px;background:#666666;"></div>
<svg class="a" style="left:317px;top:613px" width="502" height="16" shape-rendering="crispEdges"><defs><pattern id="bump" x="4" y="3" width="4" height="4" patternUnits="userSpaceOnUse"><rect x="0" y="0" width="1" height="1" fill="#ccccff"/><rect x="2" y="2" width="1" height="1" fill="#ccccff"/><rect x="1" y="1" width="1" height="1" fill="#666699"/><rect x="3" y="3" width="1" height="1" fill="#666699"/></pattern></defs><rect x="0" y="0" width="502" height="16" fill="#666699"/><rect x="1" y="1" width="500" height="14" fill="#9999cc"/><rect x="1" y="1" width="500" height="1" fill="#ccccff"/><rect x="1" y="1" width="1" height="14" fill="#ccccff"/><rect x="4" y="3" width="494" height="10" fill="url(#bump)"/></svg>
<div class="a" style="left:856px;top:614px;width:16px;height:16px;border:1px solid #fff"></div>
<div class="a" style="left:855px;top:613px;width:16px;height:16px;border:1px solid #666666"></div>
<svg class="a" style="left:862px;top:618px" width="4" height="8" shape-rendering="crispEdges"><path d="M0 0h1v8h-1z M1 1h1v6h-1z M2 2h1v4h-1z M3 3h1v2h-1z" fill="#000"/></svg>
<div class="a" style="left:118px;top:645px;width:754px;height:1px;background:#666666;"></div>
<svg class="a" style="left:0px;top:645px" width="118" height="21" shape-rendering="crispEdges"><rect x="117" y="0" width="1" height="19" fill="#666666"/><rect x="0" y="20" width="116" height="1" fill="#666666"/><rect x="0" y="19" width="115" height="1" fill="#8e8f8c"/><rect x="116" y="19" width="1" height="1" fill="#666666"/></svg>
<div class="a" style="left:-6px;top:648px;width:15px;height:16px;background:#cccdc9;border:1px solid #9a9b98;border-top-color:#fff;border-left-color:#fff;border-radius:1px"></div>
<svg class="a" style="left:0px;top:651px" width="8" height="9"><path d="M-1 1 L5 8 M5 1 L-1 8" stroke="#000" stroke-width="2"/></svg>
<div class="t" id="tx31" style="left:14.00px;top:650px;letter-spacing:0.127px;">Модуль Phone</div>
<div class="a" style="left:0px;top:667px;width:872px;height:1px;background:#dcdcd8;"></div>
<div class="a" style="left:0px;top:668px;width:872px;height:1px;background:#4f6f8f;"></div>
<div class="a" style="left:0px;top:669px;width:872px;height:2px;background:#6592bb;"></div>
<div class="a" style="left:0px;top:671px;width:872px;height:1px;background:#2d3e55;"></div>
<div class="a" style="left:0px;top:672px;width:872px;height:1px;background:#bdbdbd;"></div>
<div class="t" id="tx32" style="left:233.00px;top:5px;letter-spacing:-0.400px;">БД:</div>
<div class="a" style="left:258px;top:0px;width:149px;height:23px;border:1px solid #fff;"></div>
<div class="a" style="left:257px;top:-1px;width:149px;height:23px;border:1px solid #666666"></div>
<div class="a" style="left:257px;top:22px;width:1px;height:1px;background:#cccdc9;"></div>
<div class="a" style="left:258px;top:21px;width:1px;height:1px;background:#cccdc9;"></div>
<div class="a" style="left:406px;top:-1px;width:1px;height:1px;background:#cccdc9;"></div>
<div class="a" style="left:405px;top:0px;width:1px;height:1px;background:#cccdc9;"></div>
<div class="t" id="tx33" style="left:261.10px;top:4px;letter-spacing:0.200px;">Local</div>
<svg class="a" style="left:390px;top:8px" width="10" height="5" shape-rendering="crispEdges"><path d="M0 0h10v1h-10z M1 1h8v1h-8z M2 2h6v1h-6z M3 3h4v1h-4z M4 4h2v1h-2z" fill="#000"/></svg>
</body></html>
